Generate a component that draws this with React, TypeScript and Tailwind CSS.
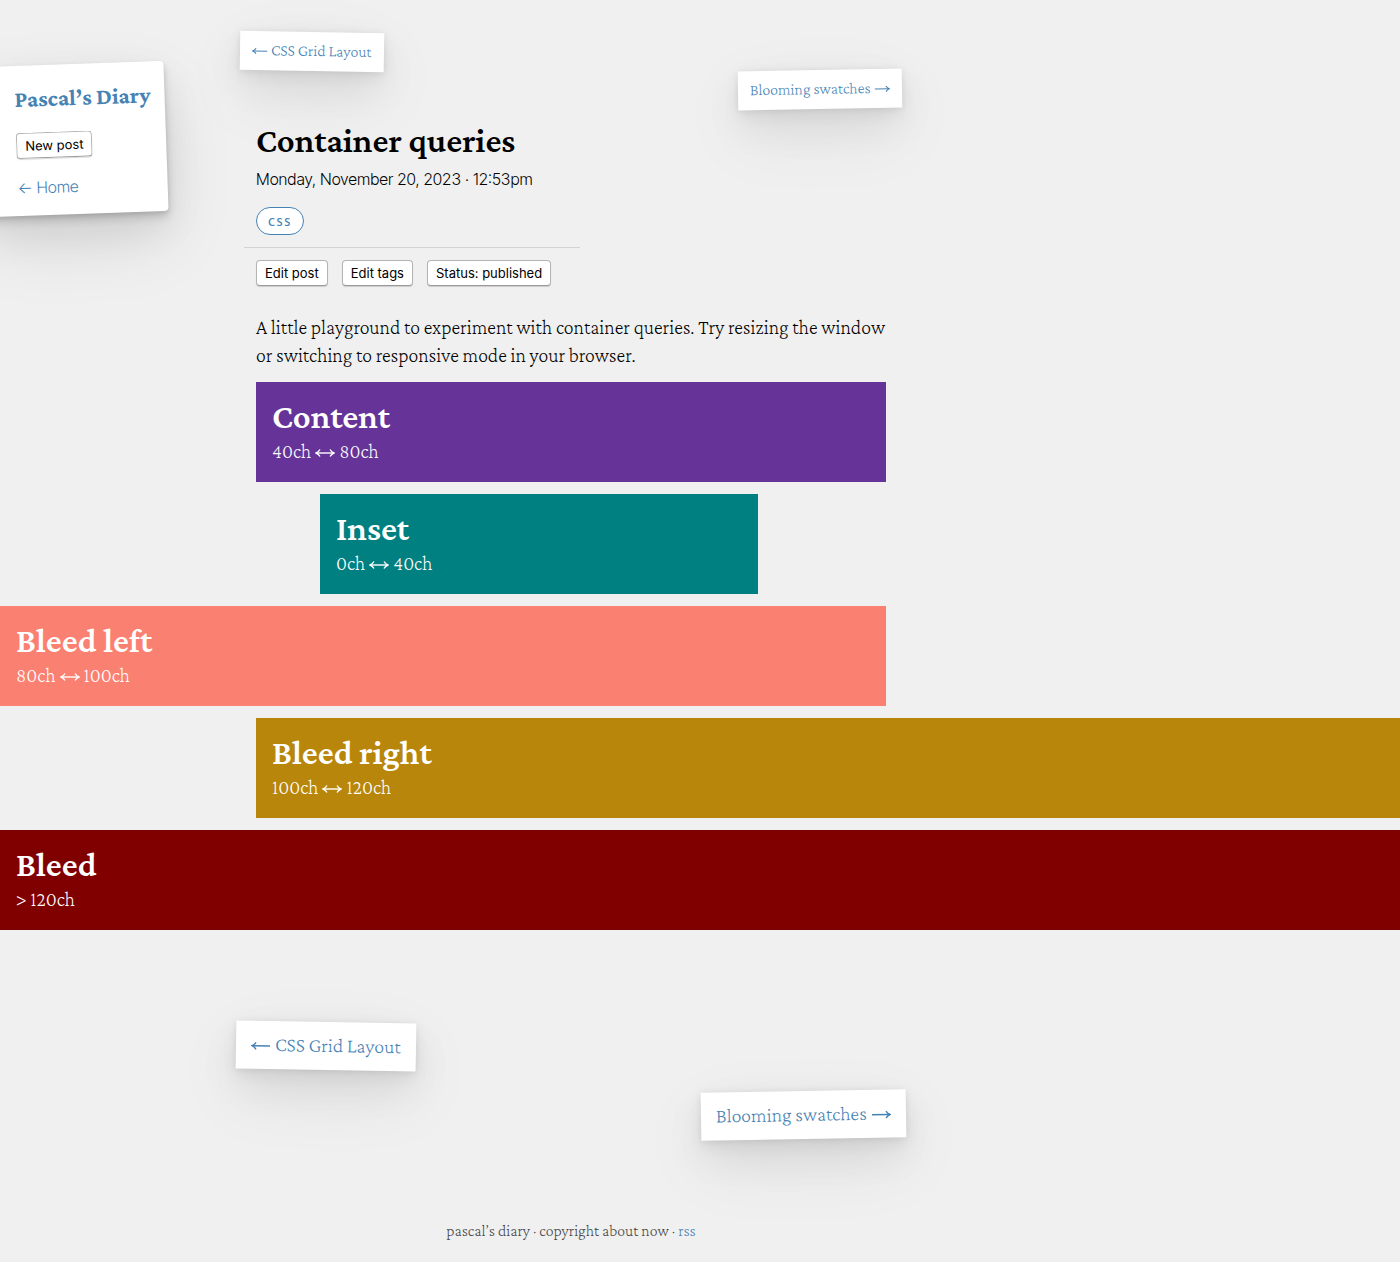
import { clsx } from "clsx";
import type { ReactNode } from "react";

const serif = "font-['Crimson_Pro','Liberation_Serif',serif]";
const sans = "font-['Inter','Liberation_Sans',sans-serif]";
const display = "font-['Inter_Tight','Inter','Liberation_Sans',sans-serif]";
const cardShadow =
  "shadow-[0_1px_6px_rgba(0,0,0,0.08),0_6px_16px_rgba(0,0,0,0.06),0_16px_40px_rgba(0,0,0,0.07),0_24px_70px_rgba(0,0,0,0.08)]";

type ArrowProps = { direction: "left" | "right" | "both"; className?: string };

function Arrow({ direction, className }: ArrowProps) {
  return (
    <svg
      viewBox="0 0 20 12"
      className={clsx("inline-block fill-none stroke-current", className)}
      strokeWidth="1.4"
      aria-hidden="true"
    >
      <path d="M1 6H19" />
      {direction !== "right" && <path d="M5 2.5Q3.5 5 1 6Q3.5 7 5 9.5" />}
      {direction !== "left" && <path d="M15 2.5Q16.5 5 19 6Q16.5 7 15 9.5" />}
    </svg>
  );
}

function ActionButton({ children }: { children: ReactNode }) {
  return (
    <button
      type="button"
      className={clsx(
        sans,
        "h-[26px] rounded border border-[#b4b4b4] border-b-[#999] bg-white px-2 text-[13px] leading-5 font-normal text-black shadow-[0_1px_1px_rgba(0,0,0,0.15)]",
      )}
    >
      {children}
    </button>
  );
}

function PostNav({ large = false }: { large?: boolean }) {
  const card = clsx(
    "flex items-center bg-white font-[250] whitespace-nowrap text-[#4682b4]",
    cardShadow,
    large ? "h-12 gap-1 px-[15px] pb-0.5 text-xl" : "h-[39px] gap-[3px] px-3 pb-px text-base",
  );
  const arrow = large ? "mt-1 h-3 w-5" : "mt-px h-[10px] w-4";
  return (
    <nav
      aria-label={large ? "More posts" : "Adjacent posts"}
      className={clsx("flex items-start justify-between", large ? "-mx-5" : "-mx-4")}
    >
      <a href="#css-grid-layout" className={clsx(card, "rotate-1")}>
        <Arrow direction="left" className={arrow} />
        CSS Grid Layout
      </a>
      <a
        href="#blooming-swatches"
        className={clsx(card, "-rotate-1", large ? "mt-[69px]" : "mt-[38px]")}
      >
        Blooming swatches
        <Arrow direction="right" className={arrow} />
      </a>
    </nav>
  );
}

const blocks = [
  { title: "Content", from: "40ch", to: "80ch", place: "col-start-2 bg-[#663399]" },
  { title: "Inset", from: "0ch", to: "40ch", place: "col-start-2 ml-16 mr-32 bg-[#008080]" },
  { title: "Bleed left", from: "80ch", to: "100ch", place: "col-start-1 col-end-3 bg-[#fa8072]" },
  { title: "Bleed right", from: "100ch", to: "120ch", place: "col-start-2 col-end-4 bg-[#b8860b]" },
  { title: "Bleed", from: "> 120ch", to: "", place: "col-start-1 col-end-4 bg-[#800000]" },
];

export default function App() {
  return (
    <div className={clsx(serif, "min-h-screen overflow-x-hidden bg-[#f0f0f0] text-black")}>
      <div className="grid grid-cols-[256px_minmax(0,630px)_1fr] gap-y-3">
        <aside className="col-start-1 row-start-1 pt-16">
          <div
            className={clsx(
              "-ml-4 flex w-[182px] -rotate-2 flex-col items-start rounded bg-white pt-[19px] pb-4 pl-8",
              "shadow-[0_2px_4px_rgba(0,0,0,0.1),0_6px_10px_rgba(0,0,0,0.14),0_16px_40px_rgba(0,0,0,0.07),0_28px_70px_rgba(0,0,0,0.1)]",
            )}
          >
            <a href="#diary" className="text-[23px] leading-7 font-bold whitespace-nowrap text-[#4682b4]">
              Pascal’s Diary
            </a>
            <div className="mt-5 mb-[17px]">
              <ActionButton>New post</ActionButton>
            </div>
            <a href="#home" className={clsx(display, "text-base font-light text-[#4682b4]")}>
              ← Home
            </a>
          </div>
        </aside>

        <header className="col-start-2 row-start-1 pt-8 pb-[15px]">
          <PostNav />
          <h1 className="mt-3 text-[35px] leading-10 font-semibold">Container queries</h1>
          <p className={clsx(display, "mt-1.5 text-base font-light")}>
            Monday, November 20, 2023 · 12:53pm
          </p>
          <div className="mt-4 flex">
            <a
              href="#css"
              className="flex h-7 items-center rounded-full border border-[#4682b4] bg-white px-[11px] pt-0.5 font-['Open_Sans',sans-serif] text-[11px] font-semibold tracking-[0.15em] text-[#4682b4]"
            >
              CSS
            </a>
          </div>
          <div className="mt-3 -ml-3 flex w-[336px] gap-[14px] border-t border-[#d3d3d3] pt-3 pl-3">
            <ActionButton>Edit post</ActionButton>
            <ActionButton>Edit tags</ActionButton>
            <ActionButton>Status: published</ActionButton>
          </div>
        </header>

        <p className="col-start-2 -mr-2 pb-px text-xl leading-7 font-[250]">
          A little playground to experiment with container queries. Try resizing the window or
          switching to responsive mode in your browser.
        </p>

        {blocks.map((block) => (
          <section key={block.title} className={clsx("px-4 pt-[15px] pb-[17px] text-white", block.place)}>
            <h2 className="text-[35px] leading-10 font-semibold">{block.title}</h2>
            <p className="flex items-center gap-1 text-xl leading-7 font-[250]">
              {block.from}
              {block.to && <Arrow direction="both" className="mt-1 h-3 w-5" />}
              {block.to}
            </p>
          </section>
        ))}

        <footer className="col-start-2 pt-20 pb-5">
          <PostNav large />
          <p className="mt-20 text-center text-base leading-6 font-[250] text-[#444]">
            pascal’s diary · copyright about now ·{" "}
            <a href="#rss" className="text-[#4682b4]">
              rss
            </a>
          </p>
        </footer>
      </div>
    </div>
  );
}
